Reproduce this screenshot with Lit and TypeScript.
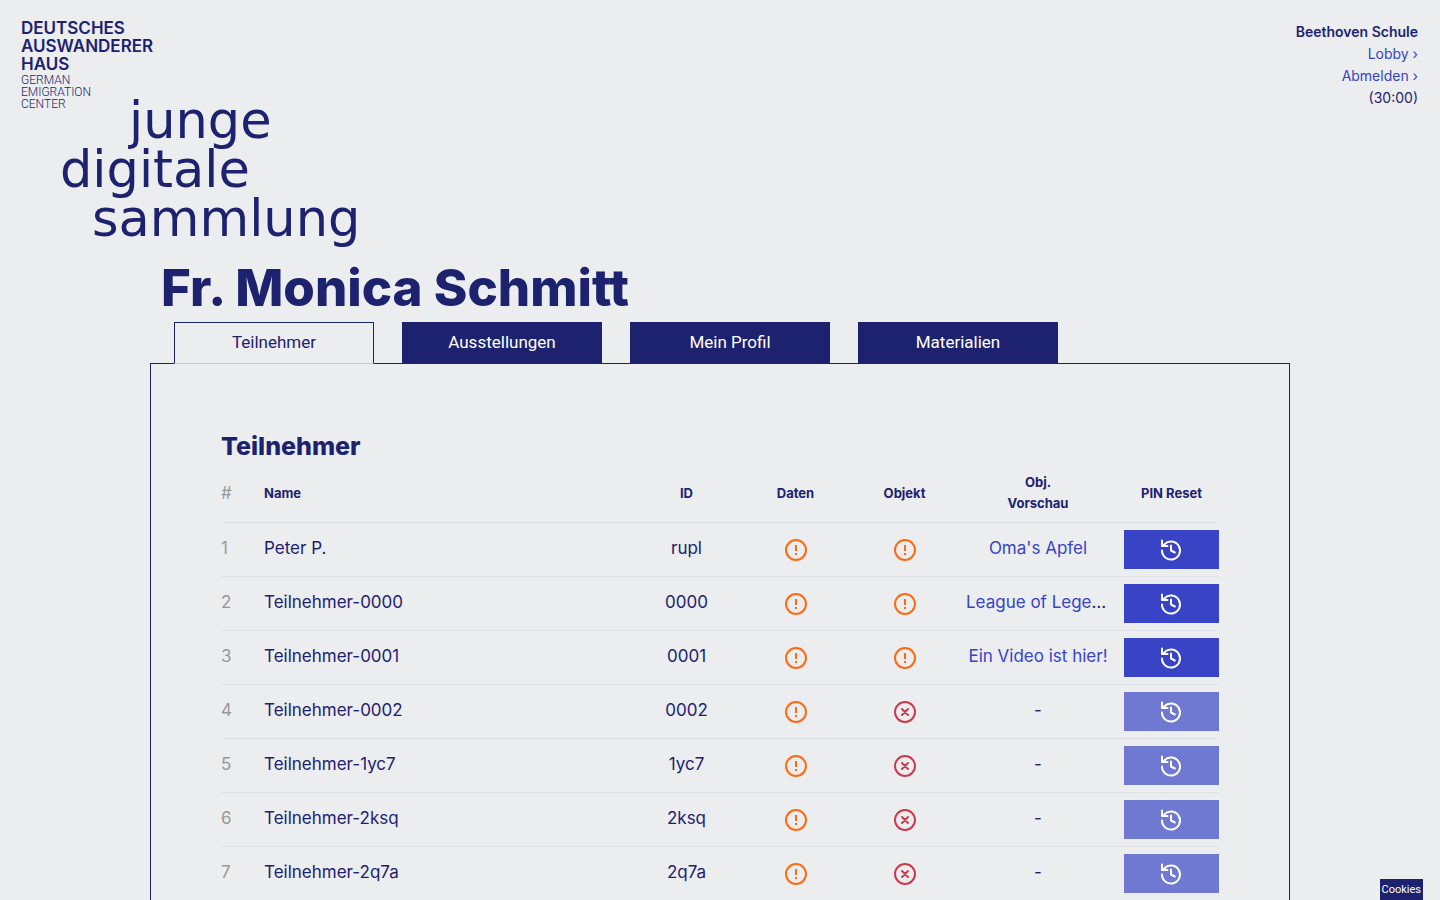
import { LitElement, html, css, svg } from "lit";
import { customElement, state } from "lit/decorators.js";

type Status = "warn" | "missing";

interface Participant {
  name: string;
  id: string;
  data: Status;
  object: Status;
  preview?: string;
}

const PARTICIPANTS: Participant[] = [
  { name: "Peter P.", id: "rupl", data: "warn", object: "warn", preview: "Oma's Apfel" },
  { name: "Teilnehmer-0000", id: "0000", data: "warn", object: "warn", preview: "League of Legends" },
  { name: "Teilnehmer-0001", id: "0001", data: "warn", object: "warn", preview: "Ein Video ist hier!" },
  { name: "Teilnehmer-0002", id: "0002", data: "warn", object: "missing" },
  { name: "Teilnehmer-1yc7", id: "1yc7", data: "warn", object: "missing" },
  { name: "Teilnehmer-2ksq", id: "2ksq", data: "warn", object: "missing" },
  { name: "Teilnehmer-2q7a", id: "2q7a", data: "warn", object: "missing" },
];

const TABS = ["Teilnehmer", "Ausstellungen", "Mein Profil", "Materialien"];

@customElement("status-icon")
export class StatusIcon extends LitElement {
  static properties = { status: { type: String } };
  declare status: Status;

  static styles = css`
    :host {
      display: block;
      height: 24px;
    }
    .icon {
      display: block;
      margin: 0 auto;
      fill: none;
      stroke-width: 2;
      stroke-linecap: round;
    }
    .warn {
      stroke: #fd6a12;
    }
    .missing {
      stroke: #cc3a50;
    }
  `;

  render() {
    const warn = this.status === "warn";
    return html`<svg
      class="icon ${this.status}"
      width="24"
      height="24"
      viewBox="0 0 24 24"
      role="img"
      aria-label=${warn ? "Unvollständig" : "Fehlt"}
    >
      <circle cx="12" cy="12" r="10"></circle>
      ${warn
        ? svg`<path d="M12 7v6M12 15v2" stroke-linecap="butt"></path>`
        : svg`<path d="M9 9l6 6M15 9l-6 6"></path>`}
    </svg>`;
  }
}

@customElement("app-root")
export class AppRoot extends LitElement {
  @state() private tab = 0;

  static styles = css`
    :host {
      display: block;
      min-height: 100vh;
      box-sizing: border-box;
      background: #ebedef;
      color: #1d226f;
      font-family: Inter, "Liberation Sans", sans-serif;
      font-size: 17px;
      line-height: 24px;
    }
    a {
      color: #3843c6;
      text-decoration: none;
    }
    .header {
      display: flex;
      justify-content: space-between;
      align-items: flex-start;
      padding: 19px 22px 0 21px;
    }
    .museum {
      display: block;
      color: inherit;
      font-size: 17px;
      font-weight: 600;
      line-height: 18px;
    }
    .museum-line,
    .sub-line,
    .logo-line {
      display: block;
    }
    .museum-sub {
      display: block;
      padding-top: 1px;
      font-family: Roboto, sans-serif;
      font-size: 12px;
      font-weight: 300;
      line-height: 12px;
    }
    .logo {
      display: block;
      margin-top: -14px;
      color: inherit;
      font-family: "DejaVu Sans", sans-serif;
      font-size: 51px;
      line-height: 49px;
    }
    .logo-junge {
      padding-left: 108px;
    }
    .logo-digitale {
      padding-left: 39px;
    }
    .logo-sammlung {
      padding-left: 71px;
    }
    .account {
      display: flex;
      flex-direction: column;
      align-items: flex-end;
      padding-top: 2px;
      font-size: 14px;
      line-height: 22px;
    }
    .school {
      font-weight: 600;
    }
    .page {
      width: calc(100% - 48px);
      max-width: 1140px;
      margin: 0 auto;
    }
    .page-title {
      margin: 0;
      padding: 10px 0 0 11px;
      font-size: 51px;
      font-weight: 800;
      line-height: 69px;
    }
    .tabs {
      display: flex;
      gap: 28px;
      padding: 0 24px;
      margin-bottom: -1px;
    }
    .tab {
      position: relative;
      width: 200px;
      height: 42px;
      padding: 0 0 3px;
      border: 1px solid #1d226f;
      background: #1d226f;
      color: #fff;
      font-family: Roboto, sans-serif;
      font-size: 17px;
      line-height: 24px;
      cursor: pointer;
    }
    .tab-active {
      border-bottom-color: #c3c6db;
      background: #ebedef;
      color: #1d226f;
    }
    .panel {
      padding: 65px 70px 70px;
      border: 1px solid #1d226f;
    }
    .panel-title {
      margin: 0;
      font-size: 25px;
      font-weight: 800;
      line-height: 34px;
    }
    .table {
      width: 100%;
      margin-top: 9px;
      border-collapse: collapse;
      table-layout: fixed;
    }
    .head {
      height: 50px;
      padding: 0 0 8px;
      border-bottom: 1px solid #dfe0e5;
      font-size: 13px;
      font-weight: 700;
      line-height: 21px;
      text-align: center;
      vertical-align: middle;
      box-sizing: border-box;
    }
    .cell {
      height: 54px;
      padding: 0;
      border-bottom: 1px solid #dfe0e5;
      text-align: center;
      box-sizing: border-box;
    }
    .text {
      padding-bottom: 3px;
    }
    .number {
      color: #989898;
      font-size: 17px;
      font-weight: 400;
      text-align: left;
    }
    .left {
      text-align: left;
    }
    .preview {
      margin: 0 7px;
      overflow: hidden;
      text-overflow: ellipsis;
      white-space: nowrap;
    }
    .last {
      padding-left: 7px;
    }
    .col-number {
      width: 43px;
    }
    .col-small {
      width: 109px;
    }
    .col-preview {
      width: 158px;
    }
    .col-reset {
      width: 102px;
    }
    .reset {
      display: flex;
      align-items: center;
      justify-content: center;
      width: 100%;
      height: 39px;
      padding: 0;
      border: 0;
      background: #3843c6;
      cursor: pointer;
    }
    .reset:disabled {
      background: #7079d2;
      cursor: default;
    }
    .reset-icon {
      fill: none;
      stroke: #fff;
      stroke-width: 2;
      stroke-linecap: round;
      stroke-linejoin: round;
    }
    .cookies {
      position: fixed;
      right: 17px;
      bottom: 0;
      height: 21px;
      padding: 0 2px;
      border: 0;
      background: #1d226f;
      color: #fff;
      font-family: Roboto, sans-serif;
      font-size: 11px;
      line-height: 20px;
      cursor: pointer;
    }
  `;

  private renderRow(p: Participant, index: number) {
    return html`<tr>
      <td class="cell text number">${index + 1}</td>
      <td class="cell text left">${p.name}</td>
      <td class="cell text">${p.id}</td>
      <td class="cell"><status-icon .status=${p.data}></status-icon></td>
      <td class="cell"><status-icon .status=${p.object}></status-icon></td>
      <td class="cell text">
        <div class="preview">${p.preview ? html`<a href="#">${p.preview}</a>` : "-"}</div>
      </td>
      <td class="cell last">
        <button class="reset" type="button" aria-label="PIN Reset" ?disabled=${!p.preview}>
          <svg class="reset-icon" width="24" height="24" viewBox="0 0 24 24" aria-hidden="true">
            <path d="M2 12.5a9 9 0 1 0 2.5-6.2L2.5 8"></path>
            <path d="M2 2.5v5.5h5.5"></path>
            <path d="M11 7.5v5l3.8 2"></path>
          </svg>
        </button>
      </td>
    </tr>`;
  }

  render() {
    return html`
      <header class="header">
        <div>
          <a class="museum" href="#">
            <span class="museum-line">DEUTSCHES</span>
            <span class="museum-line">AUSWANDERER</span>
            <span class="museum-line">HAUS</span>
            <span class="museum-sub">
              <span class="sub-line">GERMAN</span>
              <span class="sub-line">EMIGRATION</span>
              <span class="sub-line">CENTER</span>
            </span>
          </a>
          <a class="logo" href="#">
            <span class="logo-line logo-junge">junge</span>
            <span class="logo-line logo-digitale">digitale</span>
            <span class="logo-line logo-sammlung">sammlung</span>
          </a>
        </div>
        <nav class="account">
          <span class="school">Beethoven Schule</span>
          <a href="#">Lobby ›</a>
          <a href="#">Abmelden ›</a>
          <span>(30:00)</span>
        </nav>
      </header>
      <main class="page">
        <h1 class="page-title">Fr. Monica Schmitt</h1>
        <div class="tabs" role="tablist">
          ${TABS.map(
            (label, i) => html`<button
              class="tab ${i === this.tab ? "tab-active" : ""}"
              type="button"
              role="tab"
              aria-selected=${i === this.tab ? "true" : "false"}
              @click=${() => (this.tab = i)}
            >
              ${label}
            </button>`
          )}
        </div>
        <section class="panel">
          <h2 class="panel-title">Teilnehmer</h2>
          <table class="table">
            <colgroup>
              <col class="col-number" />
              <col />
              <col class="col-small" />
              <col class="col-small" />
              <col class="col-small" />
              <col class="col-preview" />
              <col class="col-reset" />
            </colgroup>
            <thead>
              <tr>
                <th class="head number" scope="col">#</th>
                <th class="head left" scope="col">Name</th>
                <th class="head" scope="col">ID</th>
                <th class="head" scope="col">Daten</th>
                <th class="head" scope="col">Objekt</th>
                <th class="head" scope="col">Obj.<br />Vorschau</th>
                <th class="head last" scope="col">PIN Reset</th>
              </tr>
            </thead>
            <tbody>
              ${PARTICIPANTS.map((p, i) => this.renderRow(p, i))}
            </tbody>
          </table>
        </section>
      </main>
      <button class="cookies" type="button">Cookies</button>
    `;
  }
}
